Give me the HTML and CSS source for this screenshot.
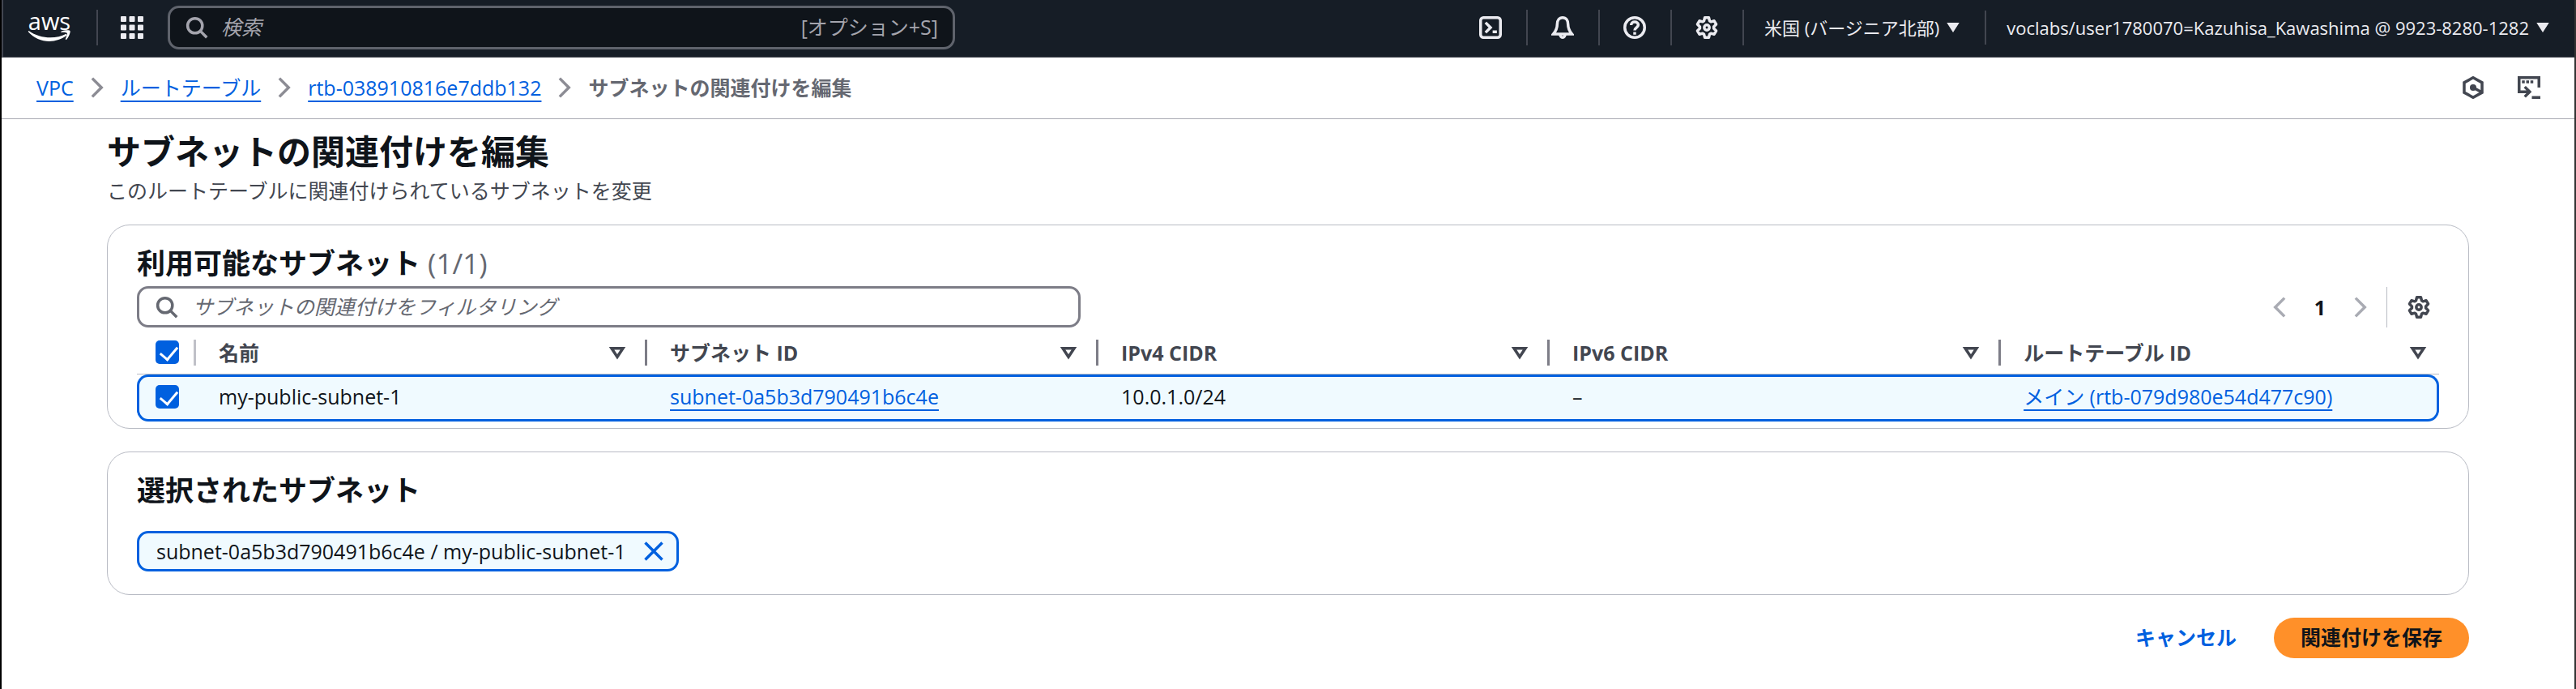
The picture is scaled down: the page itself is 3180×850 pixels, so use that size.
FILE: index.html
```html
<!DOCTYPE html>
<html lang="ja">
<head>
<meta charset="utf-8">
<title>サブネットの関連付けを編集</title>
<link rel="stylesheet" href="styles.css">
</head>
<body>
<svg class="sprite" aria-hidden="true">
  <symbol id="search" viewBox="0 0 16 16"><circle cx="6.7" cy="6.7" r="5.2"/><path d="M10.500 10.500 15 15"/></symbol>
  <symbol id="gear" viewBox="0 0 16 16"><path d="M6.600 1h2.800l.6 2.300.9.600 2.300-.6 1.400 2.400-1.700 1.700v1.200l1.700 1.700-1.400 2.400-2.300-.6-.9.600-.6 2.300H6.600L6 12.700l-.9-.6-2.300.600-1.400-2.400 1.700-1.700V7.400L1.400 5.700l1.400-2.400 2.300.600.9-.6z"/><circle cx="8" cy="8" r="1.800"/></symbol>
  <symbol id="next" viewBox="0 0 16 16"><path d="m4.500 1.500 6.500 6.500-6.500 6.500"/></symbol>
  <symbol id="prev" viewBox="0 0 16 16"><path d="M11.500 1.500 5 8l6.500 6.500"/></symbol>
  <symbol id="sort" viewBox="0 0 16 16"><path d="M4 5h8l-4 6z"/></symbol>
  <symbol id="caret" viewBox="0 0 16 16"><path d="M4.500 5h7L8 10.500z" fill="currentColor" stroke-width="1"/></symbol>
</svg>
<header class="topbar">
  <a class="logo" href="#" aria-label="aws">
    <span class="logo-word">aws</span>
    <svg class="logo-smile" viewBox="0 0 56 17"><path d="M1 1c14 10 34 12 49 4l1 2C35 19 13 17 0 2z"/><path d="M43 2c5-2 11-2 12-1s-1 8-5 12l-1-1c1-3 3-7 2-8s-5-1-8-1z"/></svg>
  </a>
  <span class="bar"></span>
  <button class="icon-btn apps" aria-label="サービス"><svg class="grid-icon" viewBox="0 0 28 28"><path d="M1 1h5v5H1zM11.500 1h5v5h-5zM22 1h5v5h-5zM1 11.500h5v5H1zM11.500 11.500h5v5h-5zM22 11.500h5v5h-5zM1 22h5v5H1zM11.500 22h5v5h-5zM22 22h5v5h-5z"/></svg></button>
  <label class="field search">
    <svg class="icon"><use href="#search"/></svg>
    <input type="text" placeholder="検索" aria-label="検索">
    <span class="hint">[オプション+S]</span>
  </label>
  <nav class="tools">
    <button class="icon-btn tool" aria-label="CloudShell"><svg class="icon" viewBox="0 0 16 16"><rect x="1" y="1" width="14" height="14" rx="2"/><path d="m4.500 4.500 3.500 3.500-3.500 3.500M9.500 11H12.500"/></svg></button>
    <button class="icon-btn tool" aria-label="通知"><svg class="icon" viewBox="0 0 16 16"><path d="M8 1C5.500 1 4.200 3 4.200 5.500c0 3-.7 4.500-2.700 7h13c-2-2.500-2.700-4-2.700-7C11.800 3 10.500 1 8 1zM6.200 12.500C6.200 14 7 15 8 15s1.800-1 1.800-2.500"/></svg></button>
    <button class="icon-btn tool" aria-label="ヘルプ"><svg class="icon" viewBox="0 0 16 16"><circle cx="8" cy="8" r="7"/><path d="M5.500 6.300C5.500 4.800 6.600 4 8 4s2.500.9 2.500 2.200C10.500 7.800 8 8 8 10M8 11.200v1.800"/></svg></button>
    <button class="icon-btn tool" aria-label="設定"><svg class="icon"><use href="#gear"/></svg></button>
    <button class="menu">米国 (バージニア北部)<svg class="icon"><use href="#caret"/></svg></button>
    <button class="menu">voclabs/user1780070=Kazuhisa_Kawashima @ 9923-8280-1282<svg class="icon"><use href="#caret"/></svg></button>
  </nav>
</header>
<nav class="crumbs" aria-label="パンくずリスト">
  <a href="#">VPC</a><svg class="icon"><use href="#next"/></svg>
  <a href="#">ルートテーブル</a><svg class="icon"><use href="#next"/></svg>
  <a href="#">rtb-038910816e7ddb132</a><svg class="icon"><use href="#next"/></svg>
  <span class="current">サブネットの関連付けを編集</span>
  <span class="crumb-tools">
    <button class="icon-btn" aria-label="診断"><svg class="icon" viewBox="0 0 16 16"><path d="M8 1l6.300 3.500v7L8 15l-6.300-3.500v-7zM8 8l5.500 3"/><circle cx="8" cy="8" r="1.300" fill="currentColor"/></svg></button>
    <button class="icon-btn" aria-label="パネル"><svg class="icon" viewBox="0 0 16 16"><path d="M15 8V1H1v10h7M5 7.500 8.500 11 5 14.500M10 15h6M3 4h2M6 4h2M9 4h2"/></svg></button>
  </span>
</nav>
<main class="page">
  <h1>サブネットの関連付けを編集</h1>
  <p class="lead">このルートテーブルに関連付けられているサブネットを変更</p>
  <section class="card available">
    <h2>利用可能なサブネット <span class="count">(1/1)</span></h2>
    <div class="controls">
      <label class="field filter">
        <svg class="icon"><use href="#search"/></svg>
        <input type="text" placeholder="サブネットの関連付けをフィルタリング" aria-label="サブネットの関連付けをフィルタリング">
      </label>
      <div class="pager">
        <button class="icon-btn muted" aria-label="前のページ"><svg class="icon"><use href="#prev"/></svg></button>
        <button class="page-no">1</button>
        <button class="icon-btn muted" aria-label="次のページ"><svg class="icon"><use href="#next"/></svg></button>
        <span class="rule"></span>
        <button class="icon-btn" aria-label="設定"><svg class="icon"><use href="#gear"/></svg></button>
      </div>
    </div>
    <table class="grid">
      <thead>
        <tr>
          <th class="pick"><input type="checkbox" checked aria-label="すべて選択"></th>
          <th class="col"><div class="head">名前<svg class="icon"><use href="#sort"/></svg></div></th>
          <th class="col"><div class="head">サブネット ID<svg class="icon"><use href="#sort"/></svg></div></th>
          <th class="col"><div class="head">IPv4 CIDR<svg class="icon"><use href="#sort"/></svg></div></th>
          <th class="col"><div class="head">IPv6 CIDR<svg class="icon"><use href="#sort"/></svg></div></th>
          <th><div class="head last">ルートテーブル ID<svg class="icon"><use href="#sort"/></svg></div></th>
        </tr>
      </thead>
      <tbody>
        <tr>
          <td class="pick"><input type="checkbox" checked aria-label="my-public-subnet-1"></td>
          <td>my-public-subnet-1</td>
          <td><a href="#">subnet-0a5b3d790491b6c4e</a></td>
          <td>10.0.1.0/24</td>
          <td>–</td>
          <td><a href="#">メイン (rtb-079d980e54d477c90)</a></td>
        </tr>
      </tbody>
    </table>
  </section>
  <section class="card chosen">
    <h2>選択されたサブネット</h2>
    <span class="token">subnet-0a5b3d790491b6c4e / my-public-subnet-1
      <button class="icon-btn" aria-label="削除"><svg class="icon" viewBox="0 0 16 16"><path d="m2 2 12 12M14 2 2 14"/></svg></button>
    </span>
  </section>
  <div class="actions">
    <button class="link-btn">キャンセル</button>
    <button class="primary">関連付けを保存</button>
  </div>
</main>
</body>
</html>
```
FILE: styles.css
```css
* { box-sizing: border-box; }
body {
  margin: 0;
  min-height: 100vh;
  border-left: 2px solid #000;
  border-right: 2px solid #333;
  background: #fff;
  color: #0f141a;
  font: 25px/34px "Open Sans", "Noto Sans CJK JP", sans-serif;
}
.sprite { position: absolute; width: 0; height: 0; }
.icon {
  width: 28px;
  height: 28px;
  flex: none;
  fill: none;
  stroke: currentColor;
  stroke-width: 2;
}
#gear { stroke-linejoin: round; }
button {
  padding: 0;
  border: 0;
  background: none;
  color: inherit;
  font: inherit;
}
.icon-btn { display: flex; }
a {
  color: #0060df;
  text-decoration-thickness: 2px;
  text-underline-offset: 6px;
}

.topbar {
  display: flex;
  align-items: center;
  height: 71px;
  padding: 0 0 2px 29px;
  border-left: 2px solid #424650;
  border-bottom: 1px solid #424650;
  background: #161d26;
  color: #ebebf0;
}
.logo {
  display: flex;
  flex-direction: column;
  align-items: center;
  width: 56px;
  color: #fff;
  text-decoration: none;
}
.logo-word { font-size: 29px; line-height: 22px; }
.logo-smile { width: 56px; height: 16px; fill: #fff; }
.bar { width: 2px; height: 44px; margin-left: 30px; background: #424650; }
.apps { margin: 0 30px 0 28px; }
.grid-icon {
  width: 28px;
  height: 28px;
  fill: currentColor;
  stroke: currentColor;
  stroke-width: 2;
  stroke-linejoin: round;
}
.field {
  display: flex;
  align-items: center;
  border: 3px solid #7d7d87;
  border-radius: 14px;
}
.field input {
  flex: 1;
  min-width: 0;
  padding: 0 0 2px;
  border: 0;
  outline: 0;
  background: none;
  color: inherit;
  font: inherit;
}
.field input::placeholder { color: inherit; opacity: 1; font-style: italic; }
.search {
  width: 972px;
  height: 54px;
  padding: 0 18px 0 19px;
  gap: 16px;
  border-color: #5f636c;
  background: #0f141a;
  color: #a4a4ad;
}
.hint { padding-bottom: 2px; }
.tools { display: flex; align-items: center; margin-left: auto; }
.tool { padding: 8px 30px 8px 29px; border-right: 2px solid #424650; }
.menu {
  display: flex;
  align-items: center;
  gap: 3px;
  padding: 4px 25px;
  font-size: 22px;
}
.menu + .menu { border-left: 2px solid #424650; }

.crumbs {
  display: flex;
  align-items: center;
  gap: 15px;
  height: 76px;
  padding: 0 42px 2px 43px;
  border-bottom: 1px solid #a9abb3;
}
.crumbs > .icon { color: #8c8c94; }
.current { color: #656871; font-weight: 700; }
.crumb-tools { display: flex; gap: 41px; margin-left: auto; color: #424650; }

.page { padding: 12px 130px 36px; }
h1 { margin: 0; font-size: 42px; line-height: 56px; }
.lead { margin: 3px 0 25px; color: #424650; }
.card { border: 1px solid #b8bbc4; border-radius: 28px; padding: 27px 36px 8px; }
h2 { margin: 0; font-size: 35px; line-height: 40px; }
.count { color: #656871; font-weight: 400; }
.controls { display: flex; justify-content: space-between; align-items: center; margin-top: 8px; }
.filter {
  width: 1165px;
  height: 51px;
  padding: 0 20px;
  gap: 18px;
  color: #656871;
}
.pager { display: flex; align-items: center; gap: 18px; padding-right: 11px; color: #424650; }
.muted { color: #a9abb3; }
.page-no { width: 36px; color: #0f141a; font-weight: 700; }
.rule { width: 1px; height: 50px; margin-right: 7px; background: #b8bbc4; }

.grid { width: 100%; border-collapse: separate; border-spacing: 0; table-layout: fixed; }
.grid th { height: 58px; padding: 4px 0 0; border-bottom: 1px solid #b8bbc4; color: #424650; text-align: left; }
.grid td { height: 58px; padding: 0 0 4px 31px; border: 3px solid #0060df; border-width: 3px 0; background: #f0faff; }
.grid td:first-child { border-left-width: 3px; border-radius: 14px 0 0 14px; padding-left: 20px; }
.grid td:last-child { border-right-width: 3px; border-radius: 0 14px 14px 0; }
.grid .pick { width: 70px; }
.grid .col { width: 19.6%; }
.grid th.pick { padding-left: 23px; }
.head {
  display: flex;
  justify-content: space-between;
  align-items: center;
  height: 32px;
  padding: 0 20px 0 28px;
  border-left: 3px solid #7d7d87;
}
.head.last { padding-right: 12px; }
.pick + th .head { border-color: #c0c1c8; }
input[type="checkbox"] {
  appearance: none;
  display: block;
  width: 29px;
  height: 29px;
  margin: 0;
  border-radius: 5px;
  background: #0060df;
}
input[type="checkbox"]::before {
  content: "";
  display: block;
  width: 10px;
  height: 18px;
  margin: 3px 0 0 10px;
  border: solid #fff;
  border-width: 0 3px 3px 0;
  transform: rotate(40deg);
}

.chosen { margin-top: 28px; padding-bottom: 28px; }
.token {
  display: inline-flex;
  align-items: center;
  gap: 20px;
  height: 50px;
  margin-top: 30px;
  padding: 0 14px 1px 21px;
  border: 3px solid #0060df;
  border-radius: 14px;
  background: #f0faff;
}
.token .icon { color: #0060df; }
.actions { display: flex; justify-content: flex-end; gap: 46px; margin-top: 28px; font-weight: 700; }
.link-btn { padding-bottom: 2px; color: #0060df; }
.primary { height: 50px; padding: 0 33px 2px; border-radius: 25px; background: #ff9029; }
```
